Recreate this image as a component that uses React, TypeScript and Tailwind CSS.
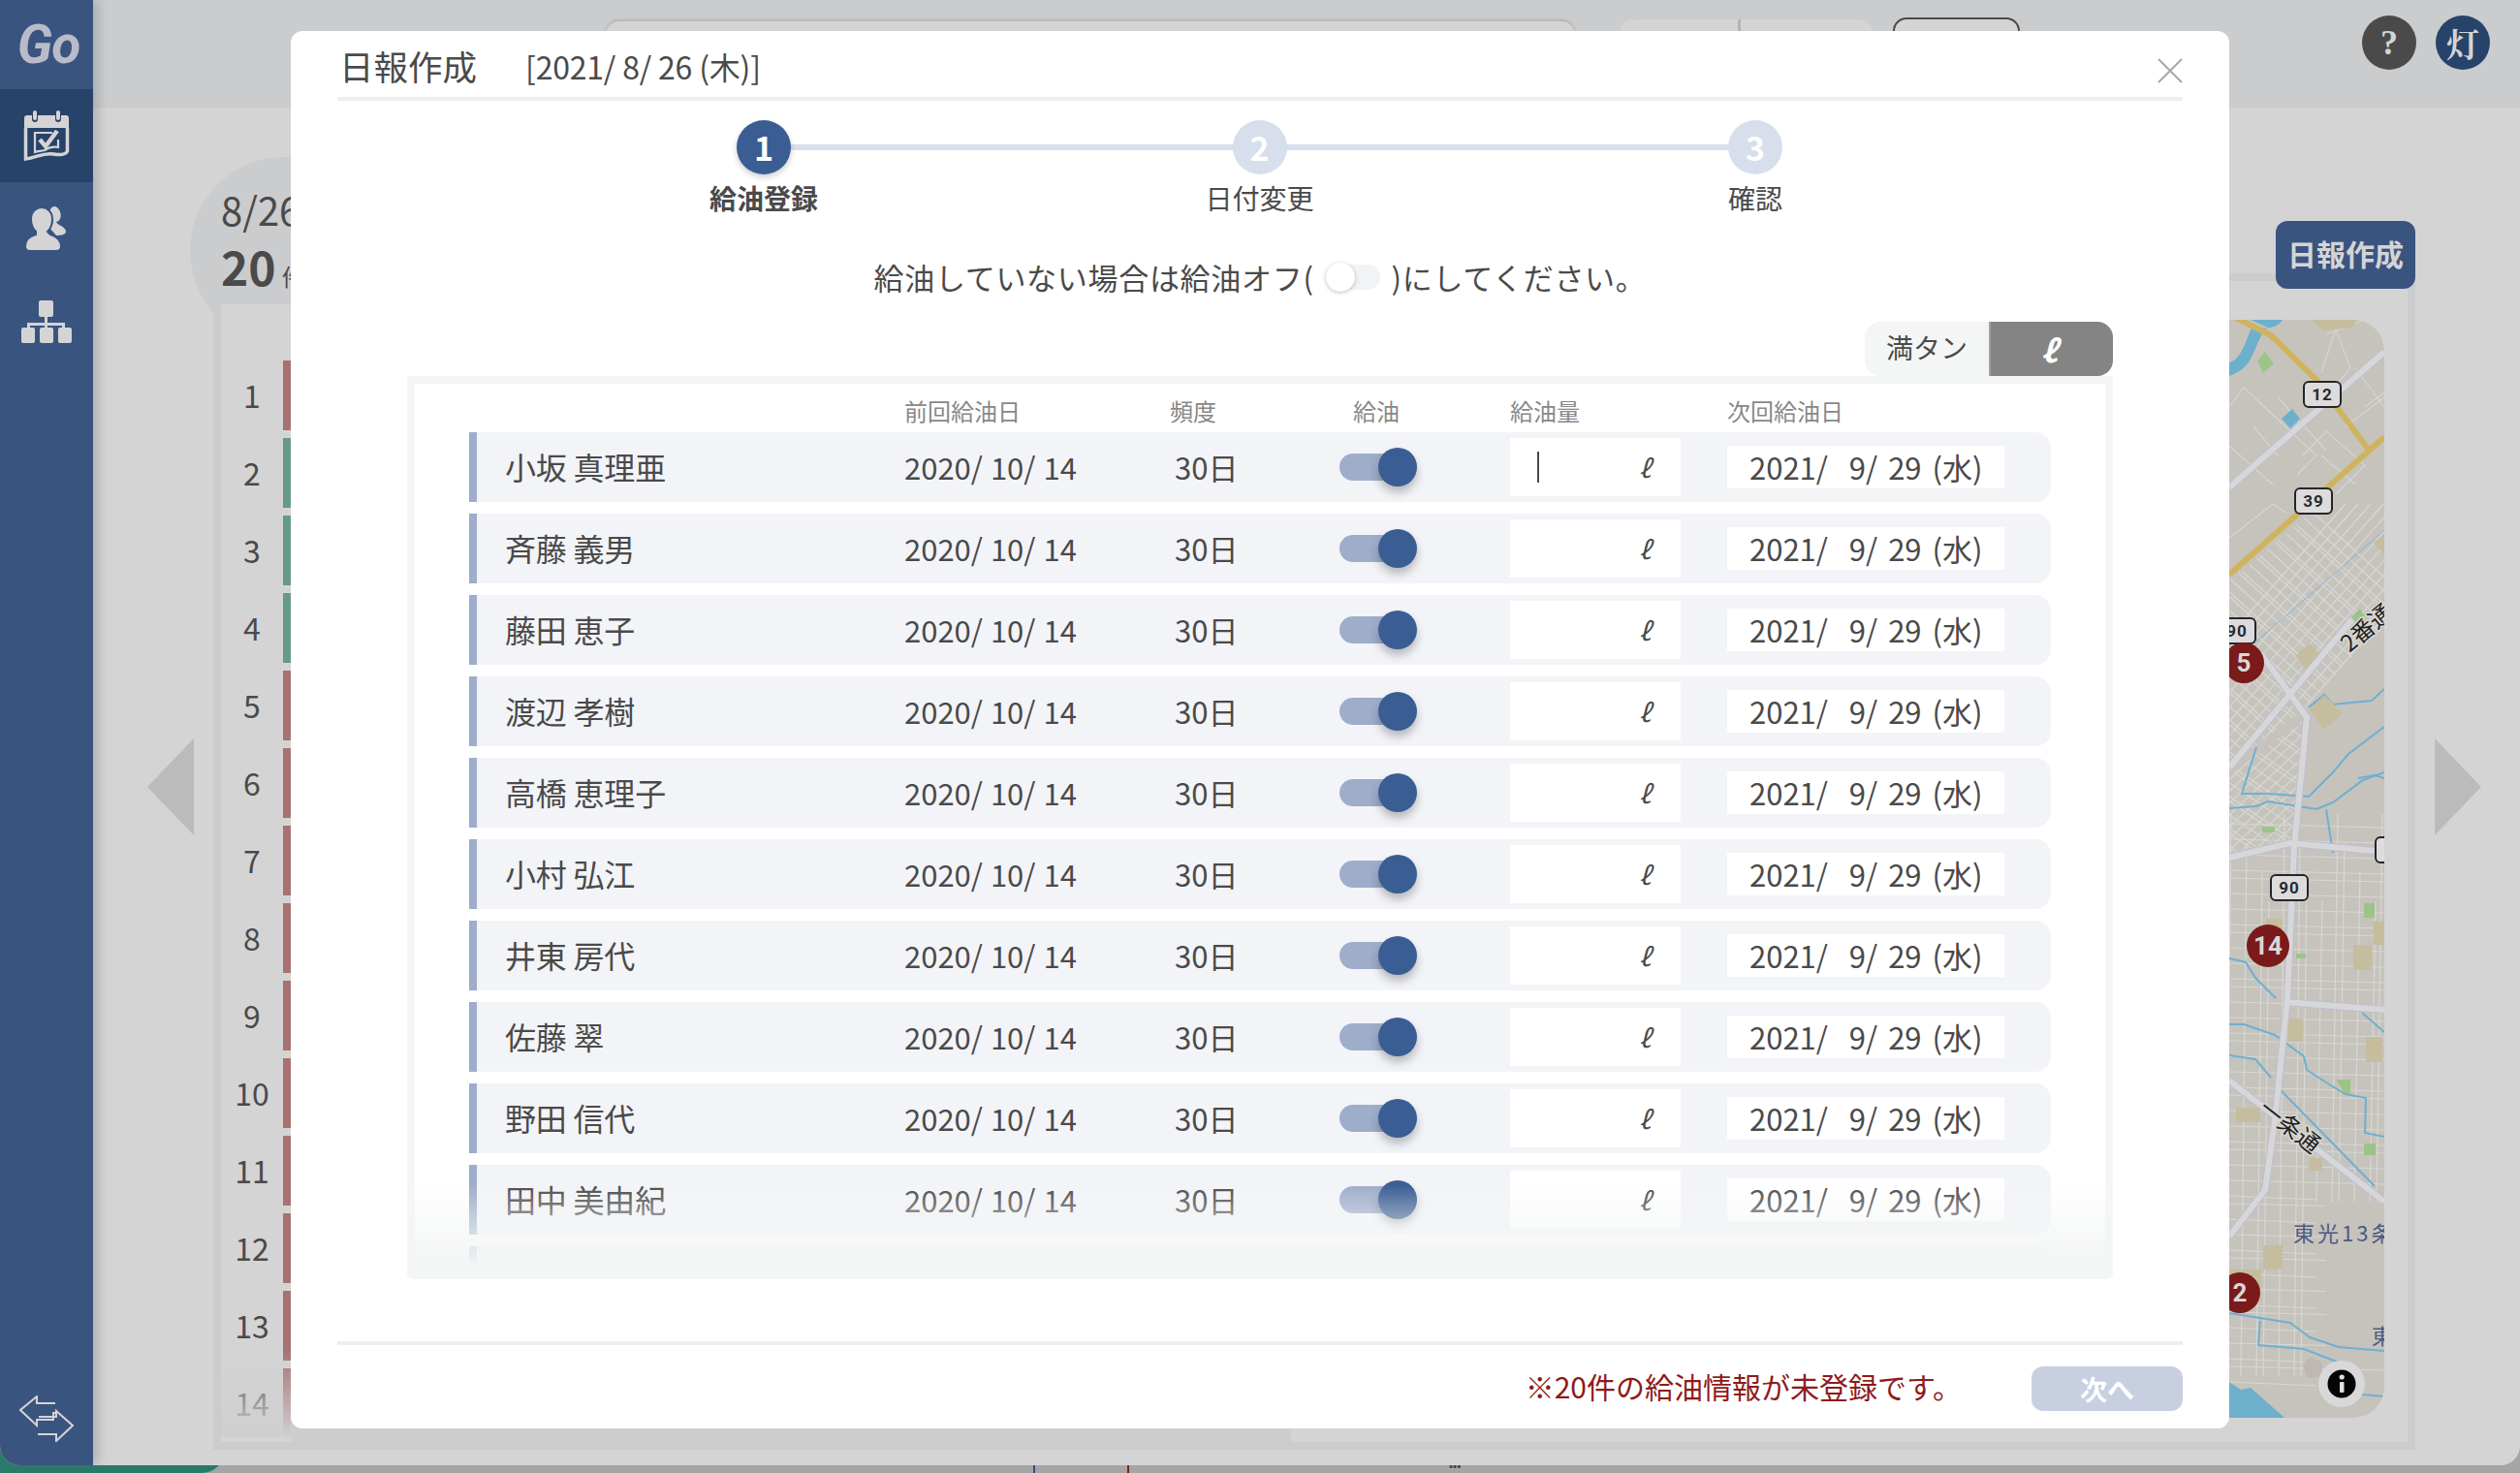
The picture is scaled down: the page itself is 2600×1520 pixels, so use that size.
const font = "font-['Noto_Sans_CJK_JP','Noto_Sans',sans-serif]"

const people = ["小坂 真理亜", "斉藤 義男", "藤田 恵子", "渡辺 孝樹", "高橋 恵理子", "小村 弘江", "井東 房代", "佐藤 翠", "野田 信代", "田中 美由紀", "井上 貴子"]
const stops = [1, 2, 3, 4, 5, 6, 7, 8, 9, 10, 11, 12, 13, 14]
const greenStops = [2, 3, 4]

const CalendarIcon = () => (
  <svg width="48" height="54" viewBox="0 0 48 54" fill="none">
    <path d="M4 6h5v4a3 3 0 0 0 6 0V6h18v4a3 3 0 0 0 6 0V6h5a3 3 0 0 1 3 3v10H1V9a3 3 0 0 1 3-3Z" fill="#d4d4d5" />
    <rect x="10" y="1" width="4" height="10" rx="2" fill="#d4d4d5" />
    <rect x="34" y="1" width="4" height="10" rx="2" fill="#d4d4d5" />
    <path d="M2.5 19v32c11-1 18-7 29-5 6 1 12 1 14-3V19" stroke="#d4d4d5" strokeWidth="3.5" />
    <path d="M30 24H12v20c3-1 6-1 10-2 3-2 8-4 14-3V31" stroke="#d4d4d5" strokeWidth="2.2" />
    <path d="M17 31l6 7 12-16" stroke="#d4d4d5" strokeWidth="4.5" />
  </svg>
)

const PeopleIcon = () => (
  <svg width="46" height="46" viewBox="0 0 46 46" fill="#d4d4d5">
    <ellipse cx="32" cy="8" rx="5.5" ry="8" transform="rotate(-14 32 8)" />
    <path d="M30 13c3 3 4 5 6 6 4 2 7 4 7 7 0 3-5 4-10 4l-6-7c2-3 3-7 3-10Z" />
    <path stroke="#3a5480" strokeWidth="2" d="M12 26c-3-3-5-7-5-13C7 6 12 1 18 1s11 5 11 12c0 6-2 10-5 13l3 3c7 2 11 7 11 12 0 3-2 5-5 5H6c-3 0-5-2-5-5 0-5 3-10 11-12Z" />
  </svg>
)

const OrgIcon = () => (
  <svg width="52" height="44" viewBox="0 0 52 44" fill="#d4d4d5">
    <rect x="18" y="0" width="15" height="17" rx="2" />
    <path d="M24 17h3v6h18v6h-3v-3H27v3h-3v-3H9v3H6v-6h18Z" />
    <rect x="0" y="28" width="14" height="16" rx="2" />
    <rect x="19" y="28" width="14" height="16" rx="2" />
    <rect x="38" y="28" width="14" height="16" rx="2" />
  </svg>
)

const SwapIcon = () => (
  <svg width="56" height="48" viewBox="0 0 56 48" fill="none" stroke="#d4d4d5" strokeWidth="2">
    <path d="M37 8H18V1L1 15l17 16v-6h17V18h2" />
    <path d="M19 40h19v7l17-16L38 16v6H20" />
  </svg>
)

const Toggle = () => (
  <div className="flex items-center">
    <div className="w-[60px] h-[28px] rounded-l-full bg-[#9eadca]" />
    <div className="-ml-[20px] w-[40px] h-[40px] rounded-full bg-[#3a5d94] shadow-[0_6px_10px_rgba(0,0,0,0.25)]" />
  </div>
)

const Row = ({ name, focused }: { name: string; focused: boolean }) => (
  <div className="flex items-center h-[72px] shrink-0 w-[1632px] bg-[#f3f4f8] border-l-[8px] border-[#9eadca] rounded-r-[16px] text-[#4a4a4a] leading-none">
    <div className="w-[441px] pl-[29px] pb-[2px] text-[32px] tracking-[-0.2px]">{name}</div>
    <div className="w-[279px] pb-[2px] text-[31px] [word-spacing:1px] whitespace-pre">2020/ 10/ 14</div>
    <div className="w-[170px] pb-[2px] text-[31px]">30日</div>
    <div className="w-[176px]"><Toggle /></div>
    <div className="flex items-center justify-between w-[176px] h-[60px] bg-white pl-[28px] pr-[31px]">
      <span className={focused ? "w-[2px] h-[32px] bg-[#4a4a4a]" : "w-[2px]"} />
      <span className="italic text-[26px]">ℓ</span>
    </div>
    <div className="ml-[48px] flex items-center w-[286px] h-[44px] bg-white pl-[23px] pb-[2px] text-[31px] [word-spacing:4px] whitespace-pre">2021/  9/ 29 (水)</div>
  </div>
)

const Step = ({ n, label, active }: { n: number; label: string; active: boolean }) => (
  <div className="relative flex flex-col items-center w-[112px]">
    <div className={active
      ? "flex items-center justify-center w-[56px] h-[56px] pb-[2px] rounded-full bg-[#3a5d94] text-white text-[34px] font-bold shadow-[0_3px_6px_rgba(0,0,0,0.2)]"
      : "flex items-center justify-center w-[56px] h-[56px] pb-[2px] rounded-full bg-[#d7deec] text-white text-[34px] font-bold"}>{n}</div>
    <div className={active ? "mt-[3px] text-[28px] font-bold text-[#4a4a4a] whitespace-nowrap" : "mt-[3px] text-[28px] text-[#4a4a4a] whitespace-nowrap"}>{label}</div>
  </div>
)

// street lines for the map, in page coordinates
const diagStreets = Array.from({ length: 34 }, (_, i) => 2120 + i * 13)
const crossStreets = Array.from({ length: 46 }, (_, i) => 360 + i * 11 + (i % 3) * 3)
const gridH = Array.from({ length: 42 }, (_, i) => 850 + i * 14 + (i % 4) * 2)
const gridV = Array.from({ length: 13 }, (_, i) => 2302 + i * 13 + (i % 3) * 3)

const Shield = ({ x, y, w, label }: { x: number; y: number; w: number; label: string }) => (
  <g>
    <rect x={x} y={y} width={w} height="26" rx="5" fill="#dcdcdd" stroke="#25252a" strokeWidth="2" />
    <text x={x + w / 2} y={y + 19} textAnchor="middle" fontSize="17" fontWeight="700" fill="#2a2a30" fontFamily="Roboto, sans-serif" letterSpacing="1">{label}</text>
  </g>
)

const Marker = ({ x, y, r, label }: { x: number; y: number; r: number; label: string }) => (
  <g>
    <circle cx={x} cy={y} r={r} fill="#7b1a1a" />
    <text x={x} y={y + 9} textAnchor="middle" fontSize="26" fontWeight="700" fill="#d8d8d8" fontFamily="Roboto, sans-serif">{label}</text>
  </g>
)

const MapView = () => (
  <svg className="block" width="500" height="1133" viewBox="1960 330 500 1133">
    <defs>
      <clipPath id="dense">
        <path d="M2300 600 2460 465V640L2380 730 2300 790Z" />
      </clipPath>
      <clipPath id="town">
        <path d="M2300 840H2460V1463H2300Z" />
      </clipPath>
      <clipPath id="south">
        <path d="M2300 800 2380 740 2365 870 2300 880Z" />
      </clipPath>
    </defs>
    <rect x="1960" y="330" width="500" height="1133" fill="#c6c3bc" />

    {/* sparse northern streets */}
    <g stroke="#d6d5d2" strokeWidth="1.2" fill="none">
      <path d="M2300 420 2315 400 2390 470 2370 490M2325 440 2350 470M2350 410 2400 465M2360 360 2388 392M2400 345 2440 330M2395 385 2410 340 2425 380 2400 410M2420 440 2460 410M2430 380 2460 420M2300 460 2345 500M2395 470 2430 500M2376 470 2400 445 2440 480 2410 510M2300 555 2345 520 2360 530M2440 420 2460 405" />
    </g>
    <g clipPath="url(#dense)" stroke="#d8d7d4" strokeWidth="1.2">
      {diagStreets.map((v, i) => (
        <line key={i} x1={v} y1="860" x2={v + 300} y2="520" />
      ))}
      {crossStreets.map((v, i) => (
        <line key={i} x1="2200" y1={v} x2="2520" y2={v + 290} />
      ))}
    </g>
    <g clipPath="url(#south)" stroke="#d8d7d4" strokeWidth="1.2">
      {crossStreets.map((v, i) => (
        <line key={i} x1="2200" y1={v + 200} x2="2520" y2={v + 420} />
      ))}
      {diagStreets.map((v, i) => (
        <line key={i} x1={v} y1="900" x2={v + 160} y2="750" />
      ))}
    </g>
    <g clipPath="url(#town)" stroke="#d8d7d4" strokeWidth="1.2">
      {gridH.map((v, i) => (
        <line key={i} x1="2300" y1={v} x2={i > 26 && i % 2 ? 2390 : 2460} y2={v + 4} />
      ))}
      {gridV.map((v, i) => (
        <line key={i} x1={v} y1={840 + (i % 4) * 30} x2={v - 6} y2={i > 6 ? 1240 : 1420} />
      ))}
    </g>
    <path d="M2400 1240H2460V1400H2400Z" fill="#c6c3bc" />

    {/* water */}
    <path d="M2300 374C2312 372 2318 350 2322 340 2328 334 2345 345 2355 330H2322L2340 338C2330 346 2328 362 2320 374 2314 382 2306 386 2300 388Z" fill="#6db0cc" />
    <path d="M2354 432 2365 422 2373 432 2363 442Z" fill="#6db0cc" />
    <path d="M2300 1426 2312 1434 2322 1432 2357 1463H2300Z" fill="#6db0cc" />
    <g fill="none" stroke="#6eb0d2" strokeWidth="2">
      <path d="M2382 730 2398 717 2407 727 2447 723 2460 711" />
      <path d="M2460 750 2423 778 2407 797 2382 822 2340 819 2313 819 2328 771" />
      <path d="M2300 834 2328 832 2340 827 2390 835 2407 828 2438 805 2460 797" />
      <path d="M2400 835 2407 880M2433 803 2450 800 2460 803" />
      <path d="M2300 989 2317 993 2327 1009 2348 1030" />
      <path d="M2300 1057 2315 1057 2347 1068 2377 1090 2380 1104 2400 1117 2420 1129 2441 1133 2440 1169 2460 1173" />
      <path d="M2300 1089 2327 1093 2343 1112" />
      <path d="M2353 1125 2450 1224" />
      <path d="M2300 1355 2363 1365 2383 1380 2413 1390 2460 1394" />
      <path d="M2332 1363 2330 1388 2377 1392 2413 1406" />
      <path d="M2436 1439 2460 1441M2437 1045 2460 1065" />
    </g>
    <path d="M2328 662 2460 547" stroke="#7fb6de" strokeWidth="1" />

    {/* parks */}
    <g fill="#c5bd9d">
      <path d="M2385 330H2432L2427 338 2397 341Z" />
      <path d="M2368 677 2383 664 2397 679 2380 692Z" />
      <path d="M2383 732 2398 717 2417 736 2398 753Z" />
      <path d="M2449 560 2460 551V572Z" />
      <rect x="2449" y="951" width="11" height="24" />
      <rect x="2428" y="975" width="19" height="26" />
      <rect x="2361" y="1051" width="15" height="24" />
      <rect x="2441" y="1070" width="17" height="26" />
      <rect x="2307" y="1143" width="25" height="15" />
      <rect x="2382" y="1195" width="14" height="13" />
      <rect x="2335" y="1285" width="20" height="25" />
      <rect x="2300" y="1310" width="33" height="20" />
      <rect x="2338" y="948" width="17" height="14" />
    </g>
    <g fill="#9cc487">
      <path d="M2329 373 2337 363 2346 375 2335 385Z" />
      <path d="M2426 637 2435 628 2442 639 2433 645Z" />
      <rect x="2334" y="853" width="13" height="6" />
      <rect x="2439" y="932" width="11" height="15" />
      <rect x="2369" y="984" width="10" height="5" />
      <path d="M2410 1114H2425V1129L2418 1127Z" />
      <rect x="2439" y="1180" width="12" height="12" />
    </g>
    <path d="M2372 1158 2380 1150 2392 1156 2392 1170 2376 1172Z" fill="#bdb9b2" transform="translate(4 250)" />

    {/* main roads */}
    <g fill="none" strokeLinejoin="round">
      <g stroke="#bcc0d0" strokeWidth="8">
        <path d="M2460 363 2300 503" />
        <path d="M2333 675 2380 740 2367 874 2360 1030 2347 1157 2337 1228 2300 1276" />
        <path d="M2427 639 2300 792" />
        <path d="M2300 885 2363 870 2450 878" />
        <path d="M2300 1115 2460 1240" />
        <path d="M2357 1034 2460 1042" />
      </g>
      <g stroke="#d7d7da" strokeWidth="6">
        <path d="M2460 363 2300 503" />
        <path d="M2333 675 2380 740 2367 874 2360 1030 2347 1157 2337 1228 2300 1276" />
        <path d="M2427 639 2300 792" />
        <path d="M2300 885 2363 870 2450 878" />
        <path d="M2300 1115 2460 1240" />
        <path d="M2357 1034 2460 1042" />
      </g>
      <g stroke="#d0b35f" strokeWidth="6">
        <path d="M2307 328 2343 346 2390 392 2443 463" />
        <path d="M2460 451 2300 593" />
      </g>
    </g>

    <Shield x={2377} y={394} w={38} label="12" />
    <Shield x={2368} y={504} w={38} label="39" />
    <Shield x={2289} y={638} w={38} label="90" />
    <Shield x={2343} y={903} w={38} label="90" />
    <rect x="2451" y="864" width="30" height="26" rx="5" fill="#dcdcdd" stroke="#25252a" strokeWidth="2" />

    <g fontFamily="'Noto Sans CJK JP', sans-serif" fontSize="24" fill="#1f1f1f" stroke="#d8d7d4" strokeWidth="3" paintOrder="stroke">
      <text transform="translate(2424 674) rotate(-40)">2番通</text>
      <text transform="translate(2329 1147) rotate(38)">一条通</text>
    </g>
    <text x="2366" y="1281" fontFamily="'Noto Sans CJK JP', sans-serif" fontSize="22" fill="#4d5a82" letterSpacing="3">東光13条</text>
    <text x="2447" y="1387" fontFamily="'Noto Sans CJK JP', sans-serif" fontSize="22" fill="#4d5a82">東</text>

    <Marker x={2315} y={684} r={21} label="5" />
    <Marker x={2340} y={976} r={22} label="14" />
    <Marker x={2311} y={1334} r={21} label="2" />

    <ellipse cx="2416" cy="1428" rx="24" ry="24" fill="#d8d8d8" />
    <circle cx="2416" cy="1428" r="14.5" fill="#050505" />
    <rect x="2414" y="1426" width="4.5" height="11" rx="1" fill="#e0e0e0" />
    <circle cx="2416.2" cy="1421" r="2.6" fill="#e0e0e0" />
  </svg>
)

const App = () => {
  return (
    <div className={`relative w-[2600px] h-[1520px] overflow-hidden bg-[#a5a5a5] ${font}`}>
      {/* desktop behind the window */}
      <div className="absolute left-0 bottom-0 w-[232px] h-[40px] rounded-br-[24px] bg-[#2a7a6a]" />
      <div className="absolute left-[1066px] bottom-0 w-[2px] h-[8px] bg-[#32508a]" />
      <div className="absolute left-[1163px] bottom-0 w-[2px] h-[8px] bg-[#8f1a1a]" />
      <div className="absolute left-[1495px] bottom-[2px] text-[12px] leading-none text-[#444]">•••</div>

      <div className="relative flex h-[1512px] w-full overflow-hidden rounded-b-[20px] bg-[#d4d4d5]">
        {/* sidebar */}
        <aside className="relative z-20 flex flex-col w-[96px] shrink-0 bg-[#3a5480] shadow-[6px_0_10px_rgba(0,0,0,0.15)]">
          <div className="flex items-center justify-center h-[92px] pl-[4px] font-['Roboto',sans-serif] italic font-bold text-[55px] text-[#b9bcc8] tracking-[-1px]">Go</div>
          <div className="flex items-center justify-center h-[96px] bg-[#274369]"><CalendarIcon /></div>
          <div className="flex items-center justify-center h-[96px]"><PeopleIcon /></div>
          <div className="flex items-center justify-center h-[96px]"><OrgIcon /></div>
          <div className="mt-auto flex justify-center pb-[24px]"><SwapIcon /></div>
        </aside>

        <div className="flex flex-col flex-1 min-w-0">
          {/* top bar */}
          <header className="flex items-start h-[112px] shrink-0 bg-[#cbccce] pl-[529px]">
            <div className="mt-[22px] w-[1000px] h-[60px] rounded-t-[14px] bg-[#d4d4d5] shadow-[0_-2px_3px_rgba(0,0,0,0.12)]" />
            <div className="mt-[20px] ml-[46px] flex w-[261px] h-[60px] rounded-t-[14px] bg-[#d4d4d5]">
              <div className="w-[125px] border-r-[3px] border-[#b5b5b6]" />
            </div>
            <div className="mt-[18px] ml-[21px] w-[131px] h-[60px] rounded-t-[14px] border-2 border-[#4a4a4a] bg-[#d4d4d5]" />
            <div className="mt-[16px] ml-[353px] flex items-center justify-center w-[56px] h-[56px] rounded-full bg-[#4a4a4a] text-[36px] font-bold text-[#d4d4d5] font-['Liberation_Serif',serif]">?</div>
            <div className="mt-[16px] ml-[20px] flex items-center justify-center w-[56px] h-[56px] rounded-full bg-[#274369] text-[34px] font-bold text-[#d4d4d5] font-['Noto_Serif_CJK_JP','Noto_Sans_CJK_JP',serif]">灯</div>
          </header>

          {/* page body, dimmed by the dialog */}
          <main className="relative flex flex-1 items-stretch pl-[124px] pr-[108px] pt-[170px] pb-[16px]">
            <div className="absolute left-[100px] top-[50px] w-[194px] h-[194px] rounded-full bg-[#cbccce]" />
            <div className="absolute z-[2] left-[132px] top-[84px] text-[40px] leading-none text-[#4a4a4a] whitespace-nowrap">8/26</div>
            <div className="absolute z-[2] left-[132px] top-[138px] flex items-baseline text-[#4a4a4a] whitespace-nowrap">
              <span className="text-[48px] leading-none font-bold">20</span>
              <span className="ml-[6px] text-[24px] leading-none">件</span>
            </div>
            <div className="absolute right-[108px] top-[116px] z-10 flex items-center justify-center w-[144px] h-[70px] pb-[4px] rounded-[12px] bg-[#3a5480] text-[30px] font-bold text-[#d4d4d5]">日報作成</div>
            <button className="absolute left-[56px] top-[650px] w-[48px] h-[100px] bg-[#bbbbbb] [clip-path:polygon(100%_0,0_50%,100%_100%)]" />
            <button className="absolute left-[2416px] top-[650px] w-[48px] h-[100px] bg-[#bbbbbb] [clip-path:polygon(0_0,100%_50%,0_100%)]" />

            <section className="relative flex flex-1 border-[8px] border-[#cbccce]">
              <div className="relative z-[1] mt-[24px] flex w-[1104px] bg-[#d4d4d5]">
                <div className="relative flex flex-col gap-[8px] w-[72px] h-[1169px] overflow-hidden pt-[58px] shrink-0">
                  {stops.map((s) => (
                    <div key={s} className="flex h-[72px] shrink-0">
                      <div className="flex items-center justify-center w-[64px] pb-[2px] text-[32px] text-[#4a4a4a]">{s}</div>
                      <div className={greenStops.includes(s) ? "w-[8px] bg-[#659a8a]" : "w-[8px] bg-[#a87272]"} />
                    </div>
                  ))}
                  <div className="absolute left-0 right-0 bottom-0 h-[90px] bg-gradient-to-b from-transparent to-[#cfcfd0]" />
                </div>
                <div className="flex-1 bg-[#cdcdce]" />
              </div>
              <div className="flex-1 flex justify-end pt-[40px] pb-[24px] pr-[24px]">
                <div className="w-[500px] h-[1133px] overflow-hidden rounded-r-[32px]">
                  <MapView />
                </div>
              </div>
            </section>
          </main>
        </div>
      </div>

      {/* dialog */}
      <div className="absolute z-30 left-[300px] top-[32px] flex flex-col w-[2000px] h-[1442px] rounded-[12px] bg-white px-[48px] text-[#4a4a4a]">
        <div className="relative flex items-center h-[72px] shrink-0 border-b-4 border-[#eeeeee] pt-[3px]">
          <span className="ml-[2px] text-[35.5px]">日報作成</span>
          <span className="ml-[50px] text-[32px] tracking-[-0.2px] whitespace-pre">[2021/ 8/ 26 (木)]</span>
          <svg className="absolute right-0 top-[28px]" width="26" height="26" viewBox="0 0 26 26" stroke="#a8a8a8" strokeWidth="2">
            <path d="M1 1l24 24M25 1 1 25" />
          </svg>
        </div>

        <div className="relative ml-[384px] flex justify-between w-[1135px] h-[136px] shrink-0 pt-[20px]">
          <div className="absolute left-[56px] right-[56px] top-[45px] h-[6px] bg-[#d7deec]" />
          <Step n={1} label="給油登録" active />
          <Step n={2} label="日付変更" active={false} />
          <Step n={3} label="確認" active={false} />
        </div>

        <div className="flex items-center justify-center h-[92px] shrink-0 text-[31px] tracking-[0.7px]">
          <span>給油していない場合は給油オフ(</span>
          <span className="flex items-center w-[56px] h-[26px] mx-[12px] rounded-full bg-[#f2f3f5]">
            <span className="w-[30px] h-[30px] rounded-full bg-white shadow-[0_1px_4px_rgba(0,0,0,0.25)]" />
          </span>
          <span>)にしてください。</span>
        </div>

        <div className="flex justify-end mr-[72px] h-[56px] shrink-0">
          <div className="flex items-center justify-center w-[128px] pb-[5px] rounded-tl-[16px] rounded-bl-[16px] bg-[#f4f6f6] text-[28px]">満タン</div>
          <div className="flex items-center justify-center w-[128px] pr-[6px] rounded-tr-[16px] rounded-br-[16px] bg-[#848484] border-l-[2px] border-[#a0a0a0] text-[32px] font-bold italic text-white">ℓ</div>
        </div>

        <div className="relative mx-[72px] h-[932px] shrink-0 rounded-b-[6px] border-[8px] border-[#f4f6f6] bg-white pl-[56px] overflow-hidden">
          <div className="flex items-center h-[50px] pt-[6px] text-[24px] text-[#888888]">
            <div className="w-[449px]" />
            <div className="w-[274px]">前回給油日</div>
            <div className="w-[189px]">頻度</div>
            <div className="w-[162px]">給油</div>
            <div className="w-[224px]">給油量</div>
            <div>次回給油日</div>
          </div>
          <div className="flex flex-col gap-[12px]">
            {people.map((p, i) => (
              <Row key={p} name={p} focused={i === 0} />
            ))}
          </div>
          <div className="absolute left-0 right-0 bottom-0 h-[90px] bg-gradient-to-b from-[#f4f6f600] via-[#f4f6f6cc] via-[70%] to-[#f4f6f6]" />
          <div className="absolute left-0 right-0 bottom-0 h-[10px] bg-[#f4f6f6]" />
        </div>

        <div className="mt-[64px] h-[4px] shrink-0 bg-[#eeeeee]" />
        <div className="flex items-center justify-end mt-[20px]">
          <span className="pb-[5px] text-[30px] text-[#8f1a1a]">※20件の給油情報が未登録です。</span>
          <button className="ml-[72px] w-[156px] h-[46px] rounded-[12px] bg-[#c8cfe1] text-[28px] font-bold text-white">次へ</button>
        </div>
      </div>
    </div>
  )
}

export default App
